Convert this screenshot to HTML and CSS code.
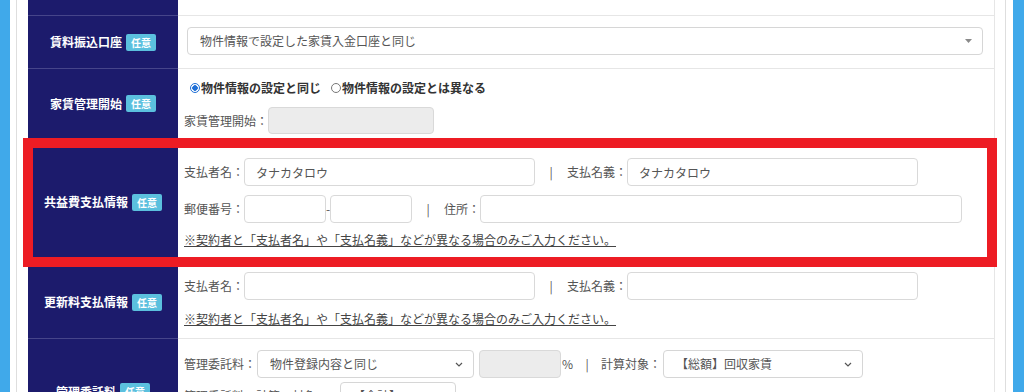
FILE: index.html
```html
<!DOCTYPE html>
<html lang="ja">
<head>
  <meta charset="UTF-8">
  <meta name="viewport" content="width=device-width, initial-scale=1.0">
  <title>契約情報入力</title>
  <link rel="stylesheet" href="styles.css">
</head>
<body>
  <div class="screen">
    <div class="side-bar"></div>

    <div class="panel">
      <div class="form-table">

        <!-- 上の行（途中まで表示） -->
        <div class="row row-top">
          <div class="head"></div>
          <div class="cell"></div>
        </div>

        <!-- 賃料振込口座 -->
        <div class="row">
          <div class="head"><span>賃料振込口座</span><span class="badge">任意</span></div>
          <div class="cell cell-bank">
            <div class="select">
              <span>物件情報で設定した家賃入金口座と同じ</span>
              <svg width="7" height="4" viewBox="0 0 7 4"><path d="M0 0h7L3.5 4z" fill="#8a8a8a"/></svg>
            </div>
          </div>
        </div>

        <!-- 家賃管理開始 -->
        <div class="row">
          <div class="head"><span>家賃管理開始</span><span class="badge">任意</span></div>
          <div class="cell cell-start">
            <div class="line radios">
              <label class="radio-item"><span class="radio checked"></span>物件情報の設定と同じ</label>
              <label class="radio-item"><span class="radio"></span>物件情報の設定とは異なる</label>
            </div>
            <div class="line">
              <span>家賃管理開始：</span>
              <input class="input input-date" type="text" disabled>
            </div>
          </div>
        </div>

        <!-- 共益費支払情報（赤枠で強調） -->
        <div class="row row-marked">
          <div class="head"><span>共益費支払情報</span><span class="badge">任意</span></div>
          <div class="cell cell-payer">
            <div class="line">
              <span>支払者名：</span>
              <input class="input w-name" type="text" value="タナカタロウ">
              <span class="sep">|</span>
              <span>支払名義：</span>
              <input class="input w-name" type="text" value="タナカタロウ">
            </div>
            <div class="line">
              <span>郵便番号：</span>
              <input class="input w-zip" type="text">
              <span class="dash">-</span>
              <input class="input w-zip" type="text">
              <span class="sep sep-addr">|</span>
              <span>住所：</span>
              <input class="input w-addr" type="text">
            </div>
            <div class="line note">※契約者と「支払者名」や「支払名義」などが異なる場合のみご入力ください。</div>
          </div>
          <div class="mark"></div>
        </div>

        <!-- 更新料支払情報 -->
        <div class="row">
          <div class="head"><span>更新料支払情報</span><span class="badge">任意</span></div>
          <div class="cell cell-renew">
            <div class="line">
              <span>支払者名：</span>
              <input class="input w-name" type="text">
              <span class="sep">|</span>
              <span>支払名義：</span>
              <input class="input w-name" type="text">
            </div>
            <div class="line note">※契約者と「支払者名」や「支払名義」などが異なる場合のみご入力ください。</div>
          </div>
        </div>

        <!-- 管理委託料 -->
        <div class="row">
          <div class="head"><span>管理委託料</span><span class="badge">任意</span></div>
          <div class="cell cell-fee">
            <div class="line">
              <span>管理委託料：</span>
              <div class="select select-fee">
                <span>物件登録内容と同じ</span>
                <svg width="8" height="5" viewBox="0 0 8 5"><path d="M1 1l3 3 3-3" fill="none" stroke="#555" stroke-width="1.2"/></svg>
              </div>
              <input class="input w-pct" type="text" disabled>
              <span class="pct">%</span>
              <span class="sep sep-pct">|</span>
              <span>計算対象：</span>
              <div class="select select-target">
                <span>【総額】回収家賃</span>
                <svg width="8" height="5" viewBox="0 0 8 5"><path d="M1 1l3 3 3-3" fill="none" stroke="#555" stroke-width="1.2"/></svg>
              </div>
            </div>
            <div class="line">
              <span>管理委託料の計算の対象：</span>
              <div class="select select-small">
                <span>【合計】</span>
                <svg width="8" height="5" viewBox="0 0 8 5"><path d="M1 1l3 3 3-3" fill="none" stroke="#555" stroke-width="1.2"/></svg>
              </div>
            </div>
          </div>
        </div>

      </div>
    </div>

    <div class="side-bar side-bar-right"></div>
  </div>
</body>
</html>
```

FILE: styles.css
```css
* {
  box-sizing: border-box;
}

body {
  margin: 0;
  font-family: "Noto Sans CJK JP", "Noto Sans", sans-serif;
  font-size: 12px;
  line-height: 18px;
  color: #555;
  background: #fff;
  overflow: hidden;
}

.screen {
  display: flex;
  height: 392px;
}

.side-bar {
  width: 10px;
  flex-shrink: 0;
  background: #40a9ea;
}

.side-bar-right {
  width: 11px;
  margin-left: 7px;
}

.panel {
  width: 990px;
  flex-shrink: 0;
  margin-left: 6px;
  border-left: 1px solid #dedede;
  border-right: 1px solid #dedede;
  padding: 0 10px 0 11px;
}

.form-table {
  border-right: 1px solid #e6e6e6;
}

.row {
  display: grid;
  grid-template-columns: 150px 1fr;
}

.head {
  background: #1c1b6c;
  color: #fff;
  font-weight: 700;
  display: flex;
  align-items: center;
  justify-content: center;
  gap: 4px;
  border-bottom: 1px solid #46458a;
}

.cell {
  border-bottom: 1px solid #e6e6e6;
  padding-left: 6px;
  display: flex;
  flex-direction: column;
}

.row-top .cell {
  height: 16px;
}

.badge {
  background: #5bc0de;
  color: #fff;
  font-size: 10px;
  line-height: 13px;
  padding: 2px 5px;
  border-radius: 2px;
}

.line {
  display: flex;
  align-items: center;
  white-space: nowrap;
}

/* 入力欄・セレクト */
.input {
  height: 28px;
  border: 1px solid #d9d9d9;
  border-radius: 4px;
  padding: 0 11px;
  font: inherit;
  color: #555;
  background: #fff;
  outline: none;
}

.input:disabled {
  background: #ececec;
}

.select {
  height: 28px;
  border: 1px solid #d6d6d6;
  border-radius: 4px;
  display: flex;
  align-items: center;
  justify-content: space-between;
  padding: 0 10px 0 12px;
  background: #fff;
  color: #555;
}

.w-name {
  width: 291px;
}

.w-zip {
  width: 82px;
}

.w-addr {
  width: 482px;
}

.w-pct {
  width: 82px;
  margin-left: 5px;
}

.sep {
  width: 32px;
  text-align: center;
}

.sep-addr {
  width: 32px;
}

.sep-pct {
  width: 28px;
}

.dash {
  width: 4px;
  text-align: center;
}

.pct {
  margin-left: 1px;
}

.note {
  color: #444;
  text-decoration: underline;
}

/* 行ごとの余白 */
.cell-bank {
  padding: 11px 11px 13px 9px;
}

.cell-start {
  padding: 10px 0 4px 6px;
  gap: 10px;
}

.cell-start .input-date {
  width: 166px;
  height: 27px;
}

.radios {
  padding-left: 6px;
  font-weight: 700;
  color: #333;
}

.radio-item {
  display: flex;
  align-items: center;
  gap: 1px;
  margin-right: 10px;
}

.radio {
  width: 10px;
  height: 10px;
  border: 1px solid #777;
  border-radius: 50%;
  background: #fff;
}

.radio.checked {
  border-color: #1f6fd6;
  background: radial-gradient(circle, #1f6fd6 0 2.5px, #fff 3px);
}

.cell-payer {
  padding: 19px 0 16px 6px;
  gap: 9px;
}

.cell-payer .note {
  margin-top: -1px;
}

.cell-renew {
  padding: 6px 0 10px 6px;
  gap: 10px;
}

.cell-fee {
  padding: 11px 0 34px 6px;
  gap: 4px;
}

.select-fee {
  width: 217px;
  margin-left: 1px;
}

.select-target {
  width: 200px;
  margin-left: 2px;
}

.select-small {
  width: 116px;
  margin-left: 12px;
}

/* 赤枠の強調 */
.row-marked {
  position: relative;
}

.mark {
  position: absolute;
  top: -1px;
  left: -5px;
  right: -3px;
  bottom: -1px;
  border: 10px solid #ed1c24;
  pointer-events: none;
}
```
